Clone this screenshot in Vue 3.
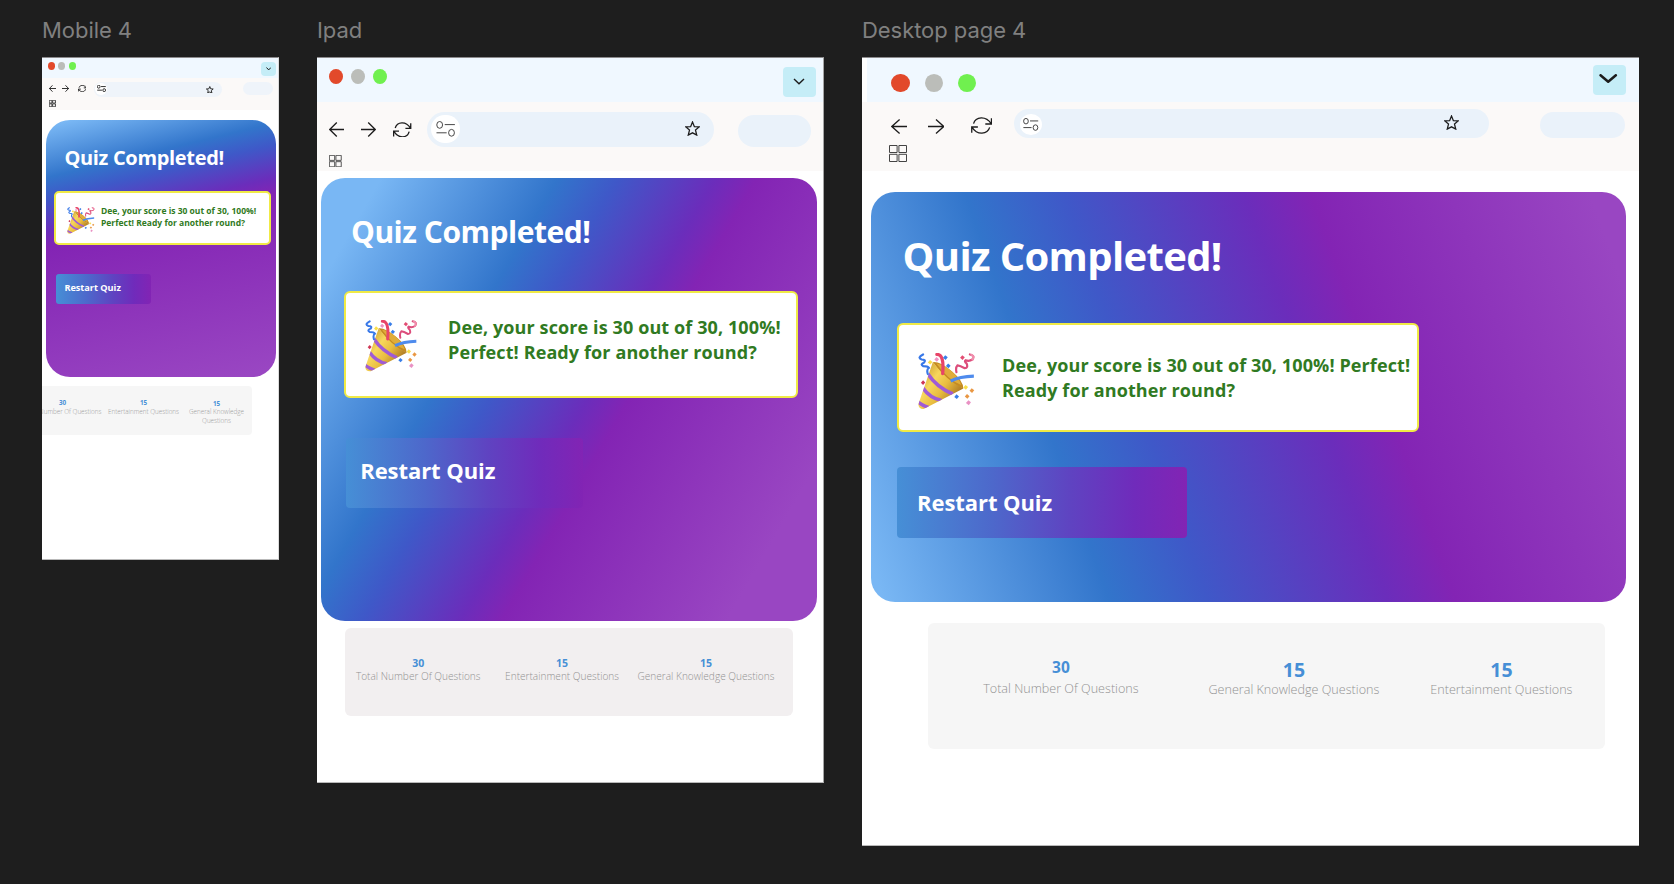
<script setup>
const devices = [
  {
    id: 'mobile',
    name: 'Mobile 4',
    stats: [
      { value: 30, label: 'Total Number Of Questions' },
      { value: 15, label: 'Entertainment Questions' },
      { value: 15, label: 'General Knowledge Questions' },
    ],
  },
  {
    id: 'ipad',
    name: 'Ipad',
    stats: [
      { value: 30, label: 'Total Number Of Questions' },
      { value: 15, label: 'Entertainment Questions' },
      { value: 15, label: 'General Knowledge Questions' },
    ],
  },
  {
    id: 'desktop',
    name: 'Desktop page 4',
    stats: [
      { value: 30, label: 'Total Number Of Questions' },
      { value: 15, label: 'General Knowledge Questions' },
      { value: 15, label: 'Entertainment Questions' },
    ],
  },
]
</script>

<template>
  <main class="canvas">
    <section v-for="d in devices" :key="d.id" class="device" :class="d.id">
      <div class="name">{{ d.name }}</div>
      <div class="frame">
        <div class="tabs">
          <i class="dot red"></i>
          <i class="dot grey"></i>
          <i class="dot green"></i>
          <span class="chevron">
            <svg viewBox="0 0 12 7" preserveAspectRatio="none"><path d="M1 1 L6 6 L11 1" /></svg>
          </span>
        </div>
        <div class="tools">
          <svg class="icon back" viewBox="0 0 16 16" preserveAspectRatio="none"><path d="M16 8H.8M8.3.6.8 8l7.5 7.4" /></svg>
          <svg class="icon forward" viewBox="0 0 16 16" preserveAspectRatio="none"><path d="M0 8h15.2M7.7.6 15.2 8l-7.5 7.4" /></svg>
          <svg class="icon reload" viewBox="0 0 20 16" preserveAspectRatio="none">
            <path d="M19.3 1.2v5.4h-5.8M2.4 6.2C4.4-.6 14.2-1.4 19 6.3M.7 14.8V9.4h5.8M17.6 9.8C15.6 16.6 5.8 17.4 1 9.7" />
          </svg>
          <div class="address">
            <span class="site">
              <svg viewBox="0 0 20 16" preserveAspectRatio="none">
                <ellipse cx="3.8" cy="3.9" rx="3" ry="3.4" /><path d="M9 3.6h10.5M.5 11.8H11" /><ellipse cx="16" cy="11.8" rx="3" ry="3.4" />
              </svg>
            </span>
            <svg class="icon star" viewBox="0 0 16 16">
              <path d="M8 1.1l2 4.9 5.2.3-4 3.4 1.3 5.3L8 12.6 3.5 15l1.3-5.3-4-3.4L6 6z" />
            </svg>
          </div>
          <div class="profile"></div>
        </div>
        <div class="marks">
          <svg class="icon grid" viewBox="0 0 18 17" preserveAspectRatio="none">
            <path d="M.5.5h7.6v7H.5zM9.9.5h7.6v7H9.9zM.5 9.3h7.6v7.2H.5zM9.9 9.3h7.6v7.2H9.9z" />
          </svg>
        </div>

        <div class="card">
          <h1>Quiz Completed!</h1>
          <div class="alert">
            <svg class="popper" viewBox="47 59 156 156" preserveAspectRatio="none">
              <defs>
                <linearGradient :id="d.id + '-cone'" x1="0" y1="0" x2="1" y2=".75">
                  <stop offset="0" stop-color="#b98220" />
                  <stop offset=".4" stop-color="#f7d75c" />
                  <stop offset=".62" stop-color="#e9bd40" />
                  <stop offset="1" stop-color="#9c6519" />
                </linearGradient>
                <clipPath :id="d.id + '-clip'">
                  <path d="M88 84L48 200Q48 214 64 213L172 157Q128 138 88 84z" />
                </clipPath>
              </defs>
              <path d="M88 84Q108 82 141 110Q172 136 172 157Q128 144 88 84z" fill="#c48b22" />
              <path d="M98 88Q120 91 141 111Q161 130 166 147Q130 134 98 88z" fill="#e0ad3a" />
              <path d="M88 84L48 200Q48 214 64 213L172 157Q128 138 88 84z" :fill="`url(#${d.id}-cone)`" />
              <g :clip-path="`url(#${d.id}-clip)`" fill="none" stroke="#9f5bd6" stroke-width="10">
                <path d="M74 116Q98 153 143 172" />
                <path d="M60 155Q80 184 112 190" />
                <path d="M45 192Q54 202 76 209" />
              </g>
              <g fill="none" stroke-linecap="round">
                <path d="M99 63Q120 62 115 116" stroke="#e84468" stroke-width="9" />
                <path d="M137 136Q162 124 201 123" stroke="#4e8bed" stroke-width="9" stroke-linecap="butt" />
                <path d="M61 63Q44 72 57 77Q70 77 64 85Q52 90 61 95Q74 95 77 100Q70 104 74 117" stroke="#3878e8" stroke-width="6" />
                <path d="M190 63Q205 66 197 77Q188 83 178 79Q174 82 181 88Q186 100 176 101Q163 94 156 93Q150 99 153 112" stroke="#dc4d7b" stroke-width="6" />
                <path d="M194 64Q203 68 197 77" stroke="#f18eac" stroke-width="6" />
              </g>
              <g>
                <path d="M122 65l7 6-6 7-7-6z" fill="#397ee8" /><path d="M130 88l7 6-6 7-7-6z" fill="#397ee8" />
                <path d="M98 70l7 6-6 7-7-6z" fill="#f092c2" /><path d="M80 78l7 6-6 7-7-6z" fill="#fae04c" />
                <path d="M169 65l7 6-6 7-7-6z" fill="#e34c72" /><path d="M61 134l6 6-6 7-6-6z" fill="#cf3756" />
                <path d="M178 147l7 6-6 7-7-6z" fill="#f9df4b" /><path d="M195 156l7 6-6 7-7-6z" fill="#e99743" />
                <path d="M182 172l7 6-6 7-7-6z" fill="#e99743" /><path d="M153 173l7 6-6 7-7-6z" fill="#397ee8" />
                <path d="M186 189l7 6-6 8-8-6z" fill="#e992c4" />
              </g>
            </svg>
            <p>Dee, your score is 30 out of 30, 100%! Perfect! Ready for another round?</p>
          </div>
          <button type="button">Restart Quiz</button>
        </div>

        <div class="stats">
          <div v-for="(s, i) in d.stats" :key="i" class="stat" :class="'s' + i">
            <strong>{{ s.value }}</strong>
            <span>{{ s.label }}</span>
          </div>
        </div>
      </div>
    </section>
  </main>
</template>

<style>
body {
  margin: 0;
  background: #1e1e1e;
}
</style>

<style scoped>
* {
  box-sizing: border-box;
}
.canvas {
  display: flex;
  align-items: flex-start;
  gap: 38px;
  width: 1674px;
  height: 884px;
  padding: 16px 0 0 42px;
  overflow: hidden;
  background: #1e1e1e;
  font-family: 'Open Sans', 'Noto Sans', sans-serif;
}
.device {
  flex: none;
}
.name {
  height: 41px;
  font: 400 22px/28px Inter, sans-serif;
  letter-spacing: -0.05px;
  color: #808080;
  white-space: nowrap;
}
.frame {
  overflow: hidden;
  background: #fff;
  border-top: 1px solid #8c8a8c;
  border-bottom: 1px solid #b9b9b9;
}
.tabs {
  display: flex;
  align-items: flex-start;
  background: #f0f8ff;
}
.dot {
  display: block;
  border-radius: 50%;
}
.red { background: #e2492b; }
.grey { background: #bbbdb9; }
.green { background: #70f04f; }
.chevron {
  display: flex;
  justify-content: center;
  margin-left: auto;
  background: #c5edf7;
}
svg {
  display: block;
  flex: none;
  fill: none;
  stroke: #1c1c1c;
}
svg path,
svg ellipse {
  vector-effect: non-scaling-stroke;
}
.tools {
  display: flex;
  align-items: flex-start;
}
.tools,
.marks {
  background: #fbf9f8;
}
.address {
  display: flex;
  align-items: flex-start;
  background: #eaf2fa;
}
.site {
  display: flex;
  align-items: center;
  justify-content: center;
  background: #fff;
  border-radius: 50%;
}
.site svg {
  stroke: #333;
}
.marks .grid {
  stroke: #444;
}
.star {
  margin-left: auto;
}
.profile {
  background: #eaf2fa;
}
.card {
  overflow: hidden;
  color: #fff;
}
h1 {
  margin: 0;
  font-weight: 700;
  line-height: 1;
  letter-spacing: -0.016em;
  white-space: nowrap;
}
.alert {
  display: flex;
  align-items: flex-start;
  background: #fff;
  border: 2px solid #f0ea45;
}
.popper {
  stroke: none;
}
.popper path {
  vector-effect: none;
}
.alert p {
  margin: 0;
  font-weight: 700;
  letter-spacing: 0.006em;
  color: #307a22;
}
button {
  display: block;
  border: 0;
  font-family: inherit;
  font-weight: 700;
  line-height: 1;
  letter-spacing: -0.003em;
  text-align: left;
  color: #fff;
  background: linear-gradient(90deg, #468fd6, #4d68cb 33%, #5f43c1 60%, #702bbb 82%, #8224b4);
}
.stats {
  display: flex;
  align-items: flex-start;
}
.stat {
  display: flex;
  flex: none;
  flex-direction: column;
  align-items: center;
  text-align: center;
}
.stat strong {
  color: #468fd6;
}
.stat span {
  font-weight: 300;
  color: #929292;
}

/* Mobile */
.mobile .frame { width: 237px; height: 503px; border-right: 1px solid #dcdcdc; }
.mobile .tabs { height: 19.5px; padding: 4.3px 2.2px 0 6px; }
.mobile .dot { width: 7px; height: 7.4px; margin-right: 3.4px; }
.mobile .chevron { width: 15px; height: 13.3px; padding-top: 5px; border-radius: 4px; }
.mobile .chevron svg { width: 5.4px; height: 3.4px; stroke-width: 1; }
.mobile .tools { height: 21.5px; padding-left: 6.5px; }
.mobile .icon { stroke-width: 0.9; }
.mobile .back { width: 7px; height: 7px; margin-top: 7.5px; }
.mobile .forward { width: 7px; height: 7px; margin: 7.5px 0 0 6.4px; }
.mobile .reload { width: 8.6px; height: 7px; margin: 7.5px 0 0 9px; }
.mobile .address { width: 128.5px; height: 15.4px; margin: 4px 0 0 7.4px; padding: 1.2px 8.6px 0 1px; border-radius: 8px; background: #eff4fa; }
.mobile .site { width: 12.6px; height: 12.6px; }
.mobile .site svg { width: 9px; height: 7px; stroke-width: 1; }
.mobile .star { width: 7.6px; height: 7.6px; margin-top: 3px; }
.mobile .profile { width: 30.5px; height: 13.4px; margin: 4.5px 0 0 20.3px; border-radius: 7px; background: #eff4fa; }
.mobile .marks { height: 11.3px; padding: .6px 0 0 7px; }
.mobile .grid { width: 6.6px; height: 7px; stroke-width: 1; }
.mobile .card {
  width: 230px; height: 257px; margin: 9.4px 0 0 3.8px; padding-top: 28.4px; border-radius: 24px;
  background: linear-gradient(166.5deg, #79b7f4 2%, #3275cb 18.5%, #3f58c8 25.5%, #6b2dbb 36%, #8324b4 41%, #9946c2 97%);
}
.mobile h1 { margin-left: 18.6px; font-size: 20px; }
.mobile .alert { width: 217.5px; height: 54px; margin: 23.2px 0 0 7.8px; border-radius: 5px; padding: 11.7px 0 0 11.5px; }
.mobile .popper { width: 27.5px; height: 27px; margin-top: 2.5px; }
.mobile .alert p { width: 162px; margin-left: 6.4px; font-size: 8.5px; line-height: 11.6px; letter-spacing: 0; }
.mobile button { width: 95.5px; height: 30px; margin: 28.6px 0 0 9.8px; padding: 8.8px 0 12px 8.8px; font-size: 9.2px; border-radius: 3px; }
.mobile .stats { width: 238px; height: 49px; margin: 9px 0 0 -28px; padding: 13.3px 0 0 8.5px; border-radius: 4px; background: #f6f6f6; }
.mobile .stat { width: 80px; font-size: 6.3px; line-height: 8.6px; }
.mobile .stat span { white-space: nowrap; color: #9a9a9a; }
.mobile .s0 { margin-right: 1px; }
.mobile .s2 { width: 66px; padding-top: .7px; }
.mobile .s2 span { white-space: normal; }

/* Tablet */
.ipad .frame { width: 507px; height: 726px; border-right: 1px solid #a5a5a5; }
.ipad .tabs { height: 44.3px; padding: 10.5px 6.8px 0 12px; }
.ipad .dot { width: 14.4px; height: 15.6px; margin-right: 7.6px; }
.ipad .chevron { width: 33px; height: 29.3px; margin-top: -1.3px; padding-top: 11.2px; border-radius: 4px; }
.ipad .chevron svg { width: 12px; height: 6.8px; margin-right: 1px; stroke-width: 1.4; }
.ipad .tools { height: 50px; padding-left: 12.4px; }
.ipad .icon { stroke-width: 1.3; }
.ipad .back { width: 15px; height: 15px; margin-top: 20px; }
.ipad .forward { width: 15px; height: 15px; margin: 19.3px 0 0 16.8px; }
.ipad .reload { width: 18.4px; height: 15.6px; margin: 19.5px 0 0 17px; }
.ipad .address { width: 287px; height: 35px; margin: 9.8px 0 0 15.3px; padding: 2.6px 13.6px 0 4.4px; border-radius: 17.5px; }
.ipad .site { width: 28.4px; height: 28.8px; }
.ipad .site svg { width: 19.4px; height: 16px; stroke-width: 0.9; }
.ipad .star { width: 15px; height: 15px; margin-top: 6.6px; }
.ipad .profile { width: 73px; height: 32.3px; margin: 12.4px 0 0 24px; border-radius: 16.2px; }
.ipad .marks { height: 19px; padding: 2.6px 0 0 12.4px; }
.ipad .grid { width: 12.6px; height: 12.2px; stroke-width: 0.9; }
.ipad .card {
  width: 495.2px; height: 443.3px; margin: 6.4px 0 0 4.4px; padding-top: 39.1px; border-radius: 24px;
  background: linear-gradient(120deg, #79b7f4 8%, #3275cb 31.5%, #3f58c8 39.5%, #6b2dbb 52.5%, #8324b4 58%, #9946c2 88%);
}
.ipad h1 { margin-left: 29.6px; font-size: 30px; }
.ipad .alert { width: 453.6px; height: 106.2px; margin: 44.7px 0 0 22.6px; padding: 21.9px 0 0 19.5px; border-radius: 6px; }
.ipad .popper { width: 52px; height: 52px; margin-top: 5px; }
.ipad .alert p { width: 348px; margin-left: 30.6px; font-size: 18px; line-height: 25px; }
.ipad button { width: 237.6px; height: 70.4px; margin: 40px 0 0 24.2px; padding: 21.4px 0 26.6px 14.6px; font-size: 22px; border-radius: 4px; }
.ipad .stats { width: 448.2px; height: 88px; margin: 7px 0 0 28px; padding: 28.7px 0 0 3.2px; border-radius: 6px; background: #f2eff0; }
.ipad .stat { width: 140px; margin-right: 3.9px; font-size: 10.1px; line-height: 13.6px; white-space: nowrap; }
.ipad .stat strong { font-size: 10.5px; }

/* Desktop */
.desktop .frame { width: 777px; height: 789px; }
.desktop .tabs { height: 44px; margin-left: 5px; padding: 7px 13.4px 0 24.2px; }
.desktop .dot { width: 18.4px; height: 18.2px; margin: 8.6px 15px 0 0; }
.desktop .chevron { width: 33px; height: 29.6px; padding-top: 9px; border-radius: 4px; }
.desktop .chevron svg { width: 18.4px; height: 9px; margin-right: 1px; stroke-width: 2.5; stroke-linecap: round; stroke-linejoin: round; }
.desktop .tools { height: 42px; padding-left: 28.6px; }
.desktop .icon { stroke-width: 1.3; }
.desktop .back { width: 16.6px; height: 15px; margin-top: 16.6px; }
.desktop .forward { width: 16.6px; height: 15px; margin: 16.6px 0 0 20.6px; }
.desktop .reload { width: 21.2px; height: 17px; margin: 14.5px 0 0 26.8px; }
.desktop .address { width: 474.4px; height: 29.2px; margin: 6.5px 0 0 21.8px; padding: 5.6px 29.6px 0 5.8px; border-radius: 14.6px; }
.desktop .site { width: 22.2px; height: 21.4px; }
.desktop .site svg { width: 15.6px; height: 13px; stroke-width: 0.9; }
.desktop .star { width: 15px; height: 15px; margin-top: .6px; }
.desktop .profile { width: 85.4px; height: 26.6px; margin: 9.6px 0 0 51.3px; border-radius: 13.4px; }
.desktop .marks { height: 26.6px; padding: .7px 0 0 27px; }
.desktop .grid { width: 18px; height: 17px; stroke-width: 1; }
.desktop .card {
  width: 755.4px; height: 410.2px; margin: 21.2px 0 0 9px; padding-top: 44.2px; border-radius: 24px;
  background: linear-gradient(70.5deg, #79b7f4 1.5%, #3275cb 26.5%, #3f58c8 37.5%, #6b2dbb 57.5%, #8324b4 65%, #9946c2 96%);
}
.desktop h1 { margin-left: 31.6px; font-size: 40px; }
.desktop .alert { width: 522.4px; height: 109.6px; margin: 46.9px 0 0 26px; padding: 28px 0 0 19.4px; border-radius: 6px; }
.desktop .popper { width: 56.6px; height: 56.6px; margin-top: .6px; }
.desktop .alert p { width: 424px; margin-left: 27px; font-size: 18px; line-height: 25px; }
.desktop button { width: 290px; height: 70.8px; margin: 34.6px 0 0 26px; padding: 24.4px 0 24.4px 20px; font-size: 22px; border-radius: 4px; }
.desktop .stats { width: 676.2px; height: 126px; margin: 21px 0 0 66.4px; padding: 33px 0 0 32.5px; border-radius: 6px; background: #f6f6f6; }
.desktop .stat { width: 200px; font-size: 12.6px; line-height: 17px; white-space: nowrap; }
.desktop .stat strong { margin-top: .7px; font-size: 19.5px; line-height: 26px; height: 24.2px; }
.desktop .s0 { margin-right: 33px; padding-top: 1px; }
.desktop .s0 strong { margin-top: 0; height: 22.6px; font-size: 15.5px; line-height: 21px; }
.desktop .s1 { margin-right: 7.5px; }
</style>
